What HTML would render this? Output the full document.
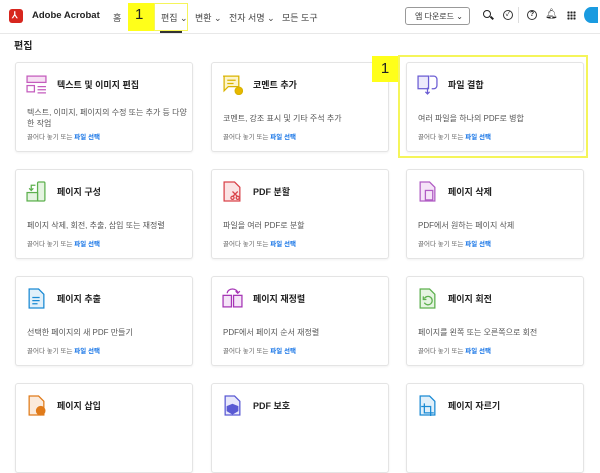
<!DOCTYPE html>
<html><head><meta charset="utf-8"><style>
*{margin:0;padding:0;box-sizing:border-box}
body{width:600px;height:429px;overflow:hidden;background:#fff;font-family:"Liberation Sans","Noto Sans CJK KR",sans-serif;color:#222;position:relative}
.a{position:absolute}
.nav{font-size:9px;color:#444;top:11px}
.card{position:absolute;width:178px;height:90px;border:1px solid #e4e4e4;border-radius:3px;background:#fff;box-shadow:0 1px 2px rgba(0,0,0,.06)}
.card .ic{position:absolute;left:10px;top:11px;width:21px;height:21px}
.card .t{position:absolute;left:41px;top:15px;font-size:9px;font-weight:bold;color:#222}
.card .d{position:absolute;left:11px;top:50px;font-size:8px;color:#555;line-height:11px;width:165px}
.card .d.two{top:44px}
.card .s{position:absolute;left:11px;top:68px;font-size:6.5px;color:#666}
.card .s b{color:#1473e6}
</style></head><body>
<div class="a" style="left:9px;top:9px;width:14px;height:14px;background:#d7261e;border-radius:3px"></div>
<div class="a" style="left:12px;top:10px;color:#fff;font-size:9px;font-weight:bold">⅄</div>
<div class="a" style="left:32px;top:10px;font-size:9.5px;font-weight:bold;color:#222">Adobe Acrobat</div>
<div class="a nav" style="left:113px">홈</div>
<div class="a" style="left:128px;top:3px;width:26px;height:28px;background:#ffff1a"></div>
<div class="a" style="left:135px;top:6px;font-size:15px;color:#222">1</div>
<div class="a" style="left:154px;top:3px;width:34px;height:28px;border:1.5px solid #f5f55a"></div>
<div class="a nav" style="left:161px">편집 ⌄</div>
<div class="a" style="left:160px;top:31px;width:22px;height:2px;background:#333"></div>
<div class="a nav" style="left:195px">변환 ⌄</div>
<div class="a nav" style="left:229px">전자 서명 ⌄</div>
<div class="a nav" style="left:282px">모든 도구</div>
<div class="a" style="left:405px;top:7px;width:65px;height:18px;border:1px solid #999;border-radius:3px;font-size:8px;padding:3px 0 0 9px;color:#333">앱 다운로드 ⌄</div>
<div class="a" style="left:483px;top:10px;width:8px;height:8px;border:1.6px solid #222;border-radius:50%"></div>
<div class="a" style="left:490px;top:17px;width:4px;height:1.6px;background:#222;transform:rotate(45deg)"></div>
<div class="a" style="left:503px;top:10px;width:10px;height:10px;border:1.2px solid #333;border-radius:50%;font-size:7px;line-height:8px;text-align:center">✓</div>
<div class="a" style="left:518px;top:7px;width:1px;height:16px;background:#ddd"></div>
<div class="a" style="left:527px;top:10px;width:10px;height:10px;border:1.2px solid #333;border-radius:50%;font-size:7px;line-height:8px;text-align:center;font-weight:bold">?</div>
<div class="a" style="left:545px;top:9px;font-size:10px">🔔︎</div>
<div class="a" style="left:567px;top:11px;width:9px;height:9px;background:radial-gradient(circle,#222 1px,transparent 1.3px) 0 0/3px 3px"></div>
<div class="a" style="left:584px;top:7px;width:14px;height:16px;border-radius:50% 0 0 50%;background:#1a9be0"></div>
<div class="a" style="left:0;top:33px;width:600px;height:1px;background:#e8e8e8"></div>
<div class="a" style="left:14px;top:37px;font-size:10px;font-weight:bold">편집</div>

<div class="card" style="left:15px;top:62px"><svg class="ic" viewBox="0 0 20 20" fill="none" stroke="#c45cbd" stroke-width="1.2"><rect x="1" y="2" width="18" height="6" fill="#f7e1f4"/><rect x="1" y="11" width="7" height="6"/><path d="M11 12h8M11 15h8M11 18h8"/></svg><div class="t">텍스트 및 이미지 편집</div><div class="d two">텍스트, 이미지, 페이지의 수정 또는 추가 등 다양한 작업</div><div class="s">끌어다 놓기 또는 <b>파일 선택</b></div></div>
<div class="card" style="left:211px;top:62px"><svg class="ic" viewBox="0 0 20 20" fill="none" stroke="#d9b300" stroke-width="1.2"><path d="M1 2h15v10H6l-4 4V2z" fill="#fdf5cc"/><path d="M5 6h8M5 9h6"/><circle cx="16" cy="16" r="3.5" fill="#e8b800"/></svg><div class="t">코멘트 추가</div><div class="d">코멘트, 강조 표시 및 기타 주석 추가</div><div class="s">끌어다 놓기 또는 <b>파일 선택</b></div></div>
<div class="card" style="left:406px;top:62px"><svg class="ic" viewBox="0 0 20 20" fill="none" stroke="#6b5dd3" stroke-width="1.2"><rect x="1" y="2" width="10" height="12" fill="#ece9fb"/><path d="M12 2h4a3 3 0 0 1 3 3v6a3 3 0 0 1-3 3h-2"/><path d="M10 13v6M8 17l2 2 2-2"/></svg><div class="t">파일 결합</div><div class="d">여러 파일을 하나의 PDF로 병합</div><div class="s">끌어다 놓기 또는 <b>파일 선택</b></div></div>

<div class="card" style="left:15px;top:169px"><svg class="ic" viewBox="0 0 20 20" fill="none" stroke="#5db04e" stroke-width="1.2"><rect x="11" y="1" width="7" height="18" rx="1" fill="#e5f4e1"/><rect x="1" y="11" width="10" height="8" fill="#e5f4e1"/><path d="M9 4H5v5M3 7l2 2 2-2"/></svg><div class="t">페이지 구성</div><div class="d">페이지 삭제, 회전, 추출, 삽입 또는 재정렬</div><div class="s">끌어다 놓기 또는 <b>파일 선택</b></div></div>
<div class="card" style="left:211px;top:169px"><svg class="ic" viewBox="0 0 20 20" fill="none" stroke="#d9434a" stroke-width="1.2"><path d="M2 1h10l5 5v13H2z" fill="#fbe3e4"/><circle cx="10" cy="16" r="1.5"/><circle cx="15" cy="16" r="1.5"/><path d="M10 10l5 5M15 10l-5 5"/></svg><div class="t">PDF 분할</div><div class="d">파일을 여러 PDF로 분할</div><div class="s">끌어다 놓기 또는 <b>파일 선택</b></div></div>
<div class="card" style="left:406px;top:169px"><svg class="ic" viewBox="0 0 20 20" fill="none" stroke="#b05cc4" stroke-width="1.2"><path d="M3 1h9l5 5v13H3z" fill="#f5e4f8"/><rect x="8" y="9" width="7" height="9"/></svg><div class="t">페이지 삭제</div><div class="d">PDF에서 원하는 페이지 삭제</div><div class="s">끌어다 놓기 또는 <b>파일 선택</b></div></div>

<div class="card" style="left:15px;top:276px"><svg class="ic" viewBox="0 0 20 20" fill="none" stroke="#1a8ad4" stroke-width="1.2"><path d="M3 1h9l5 5v13H3z" fill="#e1f0fa"/><path d="M6 9h7M6 12h7M6 15h5"/></svg><div class="t">페이지 추출</div><div class="d">선택한 페이지의 새 PDF 만들기</div><div class="s">끌어다 놓기 또는 <b>파일 선택</b></div></div>
<div class="card" style="left:211px;top:276px"><svg class="ic" viewBox="0 0 20 20" fill="none" stroke="#a535b5" stroke-width="1.2"><rect x="1" y="7" width="8" height="11" fill="#f5e4f8"/><rect x="11" y="7" width="8" height="11" fill="#f5e4f8"/><path d="M5 5a5 4 0 0 1 10 0M13 3l2 2 2-2"/></svg><div class="t">페이지 재정렬</div><div class="d">PDF에서 페이지 순서 재정렬</div><div class="s">끌어다 놓기 또는 <b>파일 선택</b></div></div>
<div class="card" style="left:406px;top:276px"><svg class="ic" viewBox="0 0 20 20" fill="none" stroke="#5db04e" stroke-width="1.2"><path d="M3 1h9l5 5v13H3z" fill="#e5f4e1"/><path d="M7 14a4 4 0 1 0 0-4M6 8v3h3"/></svg><div class="t">페이지 회전</div><div class="d">페이지를 왼쪽 또는 오른쪽으로 회전</div><div class="s">끌어다 놓기 또는 <b>파일 선택</b></div></div>

<div class="card" style="left:15px;top:383px"><svg class="ic" viewBox="0 0 20 20" fill="none" stroke="#e07b1a" stroke-width="1.2"><path d="M3 1h9l5 5v13H3z" fill="#fbeadb"/><circle cx="14" cy="15" r="4" fill="#e07b1a"/></svg><div class="t">페이지 삽입</div></div>
<div class="card" style="left:211px;top:383px"><svg class="ic" viewBox="0 0 20 20" fill="none" stroke="#5a5ad3" stroke-width="1.2"><path d="M3 1h9l5 5v13H3z" fill="#e8e8fb"/><path d="M10 9l5 2v4l-5 3-5-3v-4z" fill="#5a5ad3"/></svg><div class="t">PDF 보호</div></div>
<div class="card" style="left:406px;top:383px"><svg class="ic" viewBox="0 0 20 20" fill="none" stroke="#1a8ad4" stroke-width="1.2"><path d="M3 1h9l5 5v13H3z" fill="#e1f0fa"/><path d="M7 8v9h9M4 11h9v9"/></svg><div class="t">페이지 자르기</div></div>

<div class="a" style="left:398px;top:55px;width:190px;height:103px;border:2px solid #f5f55a"></div>
<div class="a" style="left:372px;top:56px;width:26px;height:26px;background:#ffff1a;font-size:15px;text-align:center;line-height:26px">1</div>
</body></html>
